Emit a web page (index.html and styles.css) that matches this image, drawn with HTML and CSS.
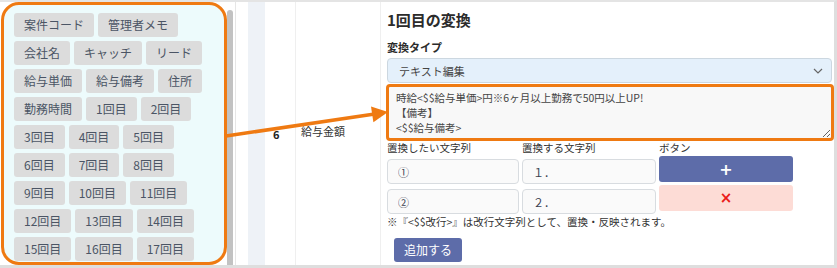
FILE: index.html
```html
<!DOCTYPE html>
<html>
<head>
    <title>変換設定</title>
    <link rel="stylesheet" href="styles.css">
</head>
<body>
    <div class="frame">
        <div class="side">
            <div class="tags">
                <span class="tag">案件コード</span>
                <span class="tag">管理者メモ</span>
                <span class="tag">会社名</span>
                <span class="tag">キャッチ</span>
                <span class="tag">リード</span>
                <span class="tag">給与単価</span>
                <span class="tag">給与備考</span>
                <span class="tag">住所</span>
                <span class="tag">勤務時間</span>
                <span class="tag">1回目</span>
                <span class="tag">2回目</span>
                <span class="tag">3回目</span>
                <span class="tag">4回目</span>
                <span class="tag">5回目</span>
                <span class="tag">6回目</span>
                <span class="tag">7回目</span>
                <span class="tag">8回目</span>
                <span class="tag">9回目</span>
                <span class="tag">10回目</span>
                <span class="tag">11回目</span>
                <span class="tag">12回目</span>
                <span class="tag">13回目</span>
                <span class="tag">14回目</span>
                <span class="tag">15回目</span>
                <span class="tag">16回目</span>
                <span class="tag">17回目</span>
            </div>
            <div class="scrollbar"><div class="thumb"></div></div>
        </div>
        <div class="col-pad"></div>
        <div class="col-idx"></div>
        <div class="col-num">6</div>
        <div class="col-name">給与金額</div>
        <div class="col-main">
            <h2 class="conv-title">1回目の変換</h2>
            <div class="conv-label">変換タイプ</div>
            <div class="conv-select">
                <span>テキスト編集</span>
                <svg class="chev" width="10" height="6" viewBox="0 0 10 6"><path d="M1 1l4 4 4-4" fill="none" stroke="#666" stroke-width="1.2"/></svg>
            </div>
            <textarea class="conv-text">時給&lt;$$給与単価&gt;円※6ヶ月以上勤務で50円以上UP!
【備考】
&lt;$$給与備考&gt;</textarea>
            <div class="rep-grid">
                <div class="rep-col">
                    <div class="rep-head">置換したい文字列</div>
                    <input class="rep-input" type="text" value="①">
                    <input class="rep-input" type="text" value="②">
                </div>
                <div class="rep-col">
                    <div class="rep-head">置換する文字列</div>
                    <input class="rep-input" type="text" value="１．">
                    <input class="rep-input" type="text" value="２．">
                </div>
                <div class="rep-col rep-btns">
                    <div class="rep-head">ボタン</div>
                    <div class="btn-add">+</div>
                    <div class="btn-del">×</div>
                </div>
            </div>
            <p class="conv-note">※『&lt;$$改行&gt;』は改行文字列として、置換・反映されます。</p>
            <div class="btn-more">追加する</div>
        </div>
        <svg class="arrow" width="837" height="268" viewBox="0 0 837 268">
            <line x1="226" y1="136" x2="373" y2="114.3" stroke="#ef7a12" stroke-width="3.5"/>
            <polygon points="388,112 373.4,122.2 371,106.4" fill="#ef7a12"/>
        </svg>
    </div>
</body>
</html>
```

FILE: styles.css
```css
body {
    margin: 0;
    font-family: "Noto Sans CJK JP", "Noto Sans", sans-serif;
    color: #333;
}

.frame {
    position: relative;
    display: flex;
    width: 837px;
    height: 268px;
    box-sizing: border-box;
    border-top: 2px solid #e4e4e4;
    border-right: 3px solid #dedede;
    border-bottom: 3px solid #dedede;
    background: #fff;
}

/* left tag list */
.side {
    display: flex;
    width: 236px;
    box-sizing: border-box;
    border-right: 1px solid #e6e6e6;
}
.tags {
    width: 226px;
    margin-left: 1px;
    box-sizing: border-box;
    border: 3px solid #ef7a12;
    border-radius: 18px;
    background: #edfbfc;
    padding: 8px 8px 0 10px;
    display: flex;
    flex-wrap: wrap;
    align-content: flex-start;
    gap: 4px;
    overflow: hidden;
}
.tag {
    height: 24px;
    line-height: 24px;
    padding: 0 10px;
    background: #dcdcdc;
    border-radius: 3px;
    font-size: 12px;
    color: #4b5565;
}
.scrollbar {
    width: 6px;
    padding-top: 8px;
}
.thumb {
    height: 100%;
    background: #c2c2c2;
    border-radius: 3px 3px 0 0;
}

/* table columns */
.col-pad {
    width: 12px;
}
.col-idx {
    width: 17px;
    background: #eef2f7;
}
.col-num {
    width: 30px;
    box-sizing: border-box;
    padding: 0 0 0 8px;
    display: flex;
    align-items: center;
    font-size: 11px;
    font-weight: bold;
    color: #222;
}
.col-name {
    width: 85px;
    box-sizing: border-box;
    border-left: 1px solid #efefef;
    padding: 0 0 6px 5px;
    display: flex;
    align-items: center;
    font-size: 11px;
    color: #333;
}
.col-main {
    flex: 1;
    border-left: 1px solid #efefef;
    padding: 7px 0 0 6px;
}

.conv-title {
    margin: 0;
    font-size: 15px;
    line-height: 22px;
    font-weight: bold;
    color: #2b2b2b;
}
.conv-label {
    margin-top: 8px;
    font-size: 11px;
    line-height: 16px;
    font-weight: bold;
    color: #2b2b2b;
}
.conv-select {
    margin-top: 3px;
    width: 445px;
    height: 25px;
    box-sizing: border-box;
    border: 1px solid #ccd7e0;
    border-radius: 4px;
    background: #e4f0fb;
    padding: 0 8px 0 11px;
    display: flex;
    align-items: center;
    justify-content: space-between;
    font-size: 11px;
    color: #444;
}
.conv-text {
    display: block;
    margin: 1px 0 0 -1px;
    width: 448px;
    height: 57px;
    box-sizing: border-box;
    border: 3px solid #ef7a12;
    border-radius: 4px;
    background: #f8f8f8;
    padding: 3px 7px;
    font-family: "Noto Sans CJK JP", "Noto Sans", sans-serif;
    font-size: 10.5px;
    line-height: 15px;
    color: #444;
    overflow: hidden;
}

.rep-grid {
    display: grid;
    grid-template-columns: 132px 134px 134px;
    column-gap: 3px;
}
.rep-col {
    display: flex;
    flex-direction: column;
    gap: 5px;
}
.rep-btns {
    gap: 3px;
}
.rep-head {
    font-size: 10.5px;
    line-height: 14px;
    color: #333;
}
.rep-col .rep-head {
    margin-bottom: -1px;
}
.rep-btns .rep-head {
    margin-bottom: -2px;
}
.rep-input {
    height: 25px;
    box-sizing: border-box;
    border: 1px solid #d8dce0;
    border-radius: 4px;
    background: #fafafa;
    padding: 0 10px;
    font-family: "Noto Sans CJK JP", "Noto Sans", sans-serif;
    font-size: 11px;
    color: #3a4150;
}
.btn-add,
.btn-del {
    height: 26px;
    border-radius: 3px;
    display: flex;
    align-items: center;
    justify-content: center;
    font-family: "DejaVu Sans", sans-serif;
    font-weight: bold;
}
.btn-add {
    background: #5d6ca9;
    color: #fff;
    font-size: 16px;
}
.btn-del {
    background: #fddcd6;
    color: #ea1a1a;
    font-size: 15px;
}

.conv-note {
    margin: 0;
    font-size: 10.5px;
    line-height: 16px;
    color: #333;
}
.btn-more {
    margin: 8px 0 0 7px;
    width: 68px;
    height: 24px;
    line-height: 24px;
    border-radius: 3px;
    background: #5d6ca9;
    color: #fff;
    font-size: 12px;
    text-align: center;
}

/* highlight arrow drawn over the table */
.arrow {
    position: absolute;
    top: -2px;
    left: 0;
    pointer-events: none;
}
```
